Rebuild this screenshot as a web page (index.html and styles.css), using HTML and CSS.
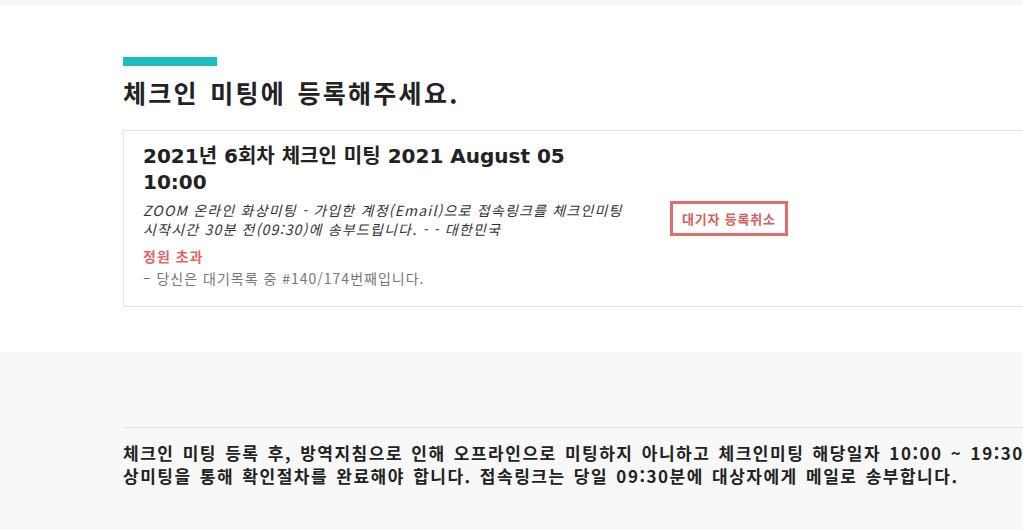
FILE: index.html
```html
<!DOCTYPE html>
<html lang="ko">
<head>
    <meta charset="UTF-8">
    <meta name="viewport" content="width=device-width, initial-scale=1.0">
    <title>체크인 미팅 등록</title>
    <link rel="stylesheet" href="styles.css">
</head>
<body>
    <div class="topbar"></div>
    <section class="main">
        <div class="container">
            <div class="accent"></div>
            <h1>체크인 미팅에 등록해주세요.</h1>
            <div class="card">
                <div class="info">
                    <h2>2021년 6회차 체크인 미팅 2021 August 05 10:00</h2>
                    <p class="desc">ZOOM 온라인 화상미팅 - 가입한 계정(Email)으로 접속링크를 체크인미팅 시작시간 30분 전(09:30)에 송부드립니다. - - 대한민국</p>
                    <p class="full">정원 초과</p>
                    <p class="waitlist">– 당신은 대기목록 중 #140/174번째입니다.</p>
                </div>
                <div class="action">
                    <button class="cancel">대기자 등록취소</button>
                </div>
            </div>
        </div>
    </section>
    <section class="notice">
        <div class="container">
            <div class="notice-inner">
                <p>체크인 미팅 등록 후, 방역지침으로 인해 오프라인으로 미팅하지 아니하고 체크인미팅 해당일자 10:00 ~ 19:30 사이에 화상미팅을 통해 확인절차를 완료해야 합니다. 접속링크는 당일 09:30분에 대상자에게 메일로 송부합니다.</p>
            </div>
        </div>
    </section>
</body>
</html>
```

FILE: styles.css
```css
body {
    margin: 0;
    background-color: #ffffff;
    color: #222;
    font-family: "Noto Sans CJK KR", sans-serif;
    overflow: hidden;
}
.topbar {
    height: 5px;
    background-color: #f8f8f8;
}
.container {
    margin-left: 123px;
    width: 995px;
}
.main {
    padding: 52px 0 45px;
}
.accent {
    width: 94px;
    height: 9px;
    background-color: #1bbdbd;
}
h1 {
    margin: 8px 0 0;
    font-size: 25px;
    line-height: 36px;
    font-weight: bold;
    letter-spacing: 2.3px;
    word-spacing: 2px;
    color: #222;
}
.card {
    margin-top: 20px;
    border: 1px solid #e4e4e4;
    padding: 12px 20px 18px 19px;
    display: flex;
    align-items: center;
    gap: 47px;
}
.info {
    width: 480px;
}
h2 {
    margin: 0;
    font-family: "DejaVu Sans", "Noto Sans CJK KR", sans-serif;
    font-size: 20px;
    line-height: 26px;
    font-weight: bold;
    color: #222;
}
.desc {
    margin: 6px 0 0;
    font-size: 14px;
    line-height: 19px;
    font-style: italic;
    letter-spacing: 1.2px;
    color: #333;
}
.full {
    margin: 7px 0 0;
    font-size: 14px;
    line-height: 20px;
    font-weight: bold;
    letter-spacing: 1px;
    color: #e06666;
}
.waitlist {
    margin: 2px 0 0;
    font-size: 14px;
    line-height: 20px;
    letter-spacing: 1px;
    color: #777;
}
.action {
    padding-top: 6px;
}
.cancel {
    background: #fff;
    border: 3px solid #e06c6c;
    color: #d85e5e;
    font-family: inherit;
    font-size: 13px;
    font-weight: bold;
    letter-spacing: 0.8px;
    padding: 5px 9px;
    cursor: pointer;
}
.notice {
    background-color: #f8f8f8;
    padding-top: 75px;
    min-height: 200px;
}
.notice-inner {
    border-top: 1px solid #e2e2e2;
    padding-top: 13px;
}
.notice p {
    margin: 0;
    font-size: 17px;
    line-height: 23px;
    font-weight: bold;
    letter-spacing: 1.5px;
    word-spacing: 2px;
    color: #222;
}
```
